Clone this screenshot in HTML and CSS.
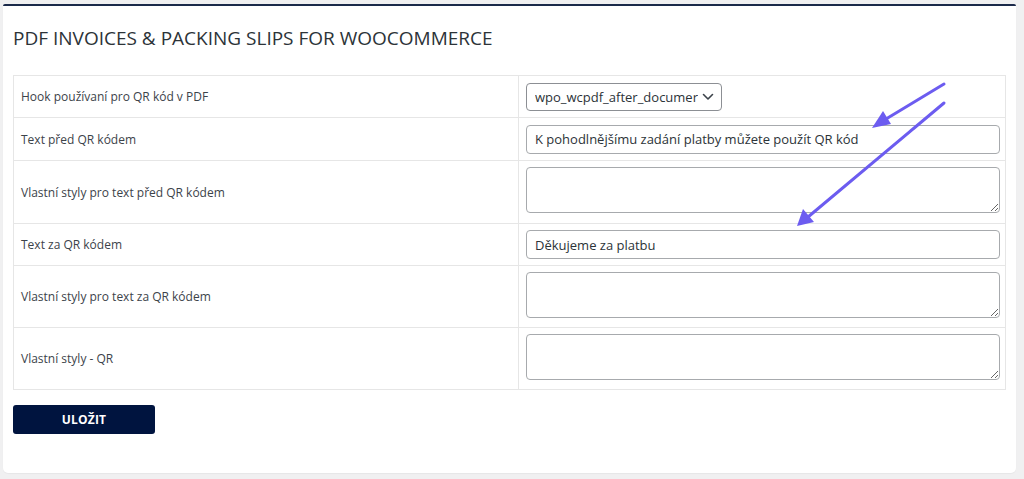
FILE: index.html
```html
<!DOCTYPE html>
<html lang="cs">
<head>
<meta charset="utf-8">
<title>PDF Invoices &amp; Packing Slips</title>
<link rel="stylesheet" href="styles.css">
</head>
<body>
<div class="card">
  <h1 class="title">PDF INVOICES &amp; PACKING SLIPS FOR WOOCOMMERCE</h1>
  <table class="settings">
    <tr class="r1">
      <td class="label">Hook používaní pro QR kód v PDF</td>
      <td class="field">
        <div class="select">
          <span class="select-text">wpo_wcpdf_after_documer</span>
          <svg class="chev" width="12" height="8" viewBox="0 0 12 8"><path d="M1.5 1.5 L6 6 L10.5 1.5" fill="none" stroke="#3c434a" stroke-width="1.6" stroke-linecap="round" stroke-linejoin="round"/></svg>
        </div>
      </td>
    </tr>
    <tr class="r2">
      <td class="label">Text před QR kódem</td>
      <td class="field"><input class="text" type="text" value="K pohodlnějšímu zadání platby můžete použít QR kód"></td>
    </tr>
    <tr class="r3">
      <td class="label">Vlastní styly pro text před QR kódem</td>
      <td class="field top"><textarea class="area"></textarea></td>
    </tr>
    <tr class="r4">
      <td class="label">Text za QR kódem</td>
      <td class="field"><input class="text" type="text" value="Děkujeme za platbu"></td>
    </tr>
    <tr class="r5">
      <td class="label">Vlastní styly pro text za QR kódem</td>
      <td class="field top"><textarea class="area"></textarea></td>
    </tr>
    <tr class="r6">
      <td class="label">Vlastní styly - QR</td>
      <td class="field top"><textarea class="area"></textarea></td>
    </tr>
  </table>
  <button class="save" type="button">ULOŽIT</button>
</div>
<svg class="arrows" width="1024" height="479" viewBox="0 0 1024 479">
  <g stroke="#6c5cf0" stroke-width="3" stroke-linecap="round" fill="#6c5cf0">
    <line x1="944" y1="84" x2="886" y2="119"/>
    <polygon points="872,128 883,111 891,124" stroke="none"/>
    <line x1="944" y1="103" x2="808" y2="217"/>
    <polygon points="797,226 803,209 814,222" stroke="none"/>
  </g>
</svg>
</body>
</html>
```

FILE: styles.css
```css
html, body {
  margin: 0;
  padding: 0;
}
body {
  background: #f0f0f1;
  font-family: "Open Sans", "Noto Sans", sans-serif;
  color: #3c434a;
  width: 1024px;
  height: 479px;
  overflow: hidden;
  position: relative;
}
.card {
  margin: 4px 8px 0 3px;
  height: 469px;
  background: #fff;
  border-top: 2px solid #1b2a4a;
  border-radius: 2px 2px 5px 5px;
  padding: 0 10px;
  box-sizing: border-box;
  box-shadow: 0 1px 1px rgba(0,0,0,0.04);
}
.title {
  margin: 0;
  padding-top: 19px;
  height: 50px;
  box-sizing: content-box;
  font-size: 19px;
  line-height: 26px;
  font-weight: 400;
  color: #2c3338;
}
.settings {
  width: 993px;
  border-collapse: collapse;
  table-layout: fixed;
}
.settings td {
  border: 1px solid #e6e6e6;
  padding: 0 7px;
  vertical-align: middle;
}
.settings td.label {
  width: 490px;
  font-size: 12px;
  color: #3c434a;
}
.settings td.top {
  vertical-align: top;
  padding-top: 6px;
}
.r1 td { height: 41px; }
.r2 td { height: 42px; }
.r3 td { height: 62px; }
.r4 td { height: 41px; }
.r5 td { height: 61px; }
.r6 td { height: 61px; }
.r3 td.top, .r5 td.top, .r6 td.top { height: 55px; }
.select {
  display: flex;
  align-items: center;
  justify-content: space-between;
  width: 196px;
  height: 28px;
  box-sizing: border-box;
  border: 1px solid #8c8f94;
  border-radius: 4px;
  padding: 0 7px 0 8px;
  font-size: 13px;
  color: #2c3338;
}
.select-text {
  white-space: nowrap;
  overflow: hidden;
}
.chev { flex: none; margin-left: 4px; }
.text {
  display: block;
  width: 474px;
  height: 29px;
  box-sizing: border-box;
  border: 1px solid #a7aaad;
  border-radius: 4px;
  padding: 0 8px;
  margin: 0;
  font-family: "Open Sans", "Noto Sans", sans-serif;
  font-size: 13px;
  color: #2c3338;
  background: #fff;
}
.area {
  display: block;
  width: 474px;
  height: 46px;
  box-sizing: border-box;
  border: 1px solid #a7aaad;
  border-radius: 4px;
  margin: 0;
  font-family: "Open Sans", "Noto Sans", sans-serif;
  font-size: 13px;
}
.save {
  margin-top: 15px;
  width: 142px;
  height: 29px;
  background: #00143f;
  color: #fff;
  border: none;
  border-radius: 3px;
  font-family: "Open Sans", "Noto Sans", sans-serif;
  font-weight: 700;
  font-size: 12px;
  letter-spacing: 0.2px;
  padding: 0;
}
.arrows {
  position: absolute;
  left: 0;
  top: 0;
  pointer-events: none;
}
```
